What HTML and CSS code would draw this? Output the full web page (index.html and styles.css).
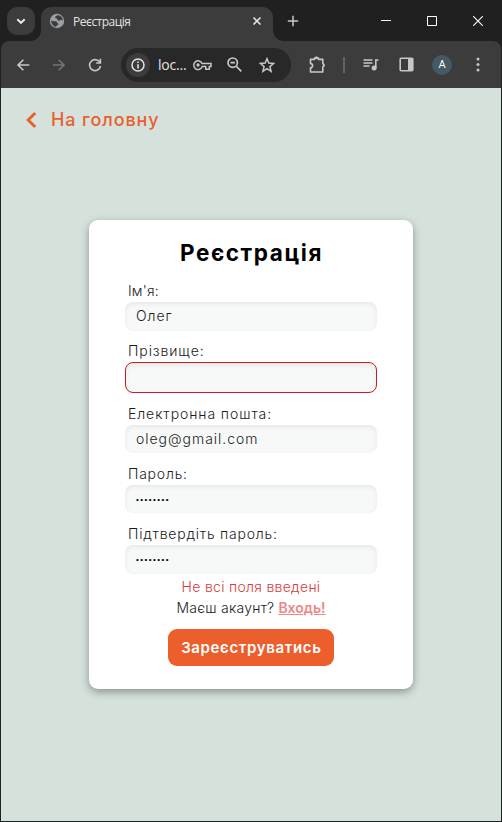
FILE: index.html
```html
<!DOCTYPE html>
<html lang="uk">
<head>
<meta charset="utf-8">
<title>Реєстрація</title>
<link rel="stylesheet" href="styles.css">
</head>
<body>
<div class="window">
  <header class="tabstrip">
    <div class="tab-search"><svg width="12" height="12" viewBox="0 0 12 12"><path d="M2.3 4.2 6 7.8 9.7 4.2" fill="none" stroke="#e8e8e8" stroke-width="1.9"/></svg></div>
    <div class="tab">
      <svg class="globe" width="16" height="16" viewBox="0 0 16 16"><circle cx="8" cy="8" r="7.2" fill="#9aa0a6"/><path d="M2.2 7.2c1.5 1.5 3.6.6 5.2 1.2 1.2.5.6 1.8 1.6 2.1.7.3.6 1.3-.4 1.5-1.2.2-.7 1.3-1.4 1.8-3-.2-5.1-3.3-5-6.6ZM8.3 2.2c-.6 1-2.3 1-2.2 2.2.1 1 1.5.5 2.1 1.3.8 1.1-.2 1.5 1.2 2 1.5.6 1.5-1.2 2.8-.9.8.2 1 .8 1.7.7C13.700 4.500 11.600 2 8.300 2.200Z" fill="#3c3c3c"/></svg>
      <span class="tab-title">Реєстрація</span>
      <svg class="tab-close" width="10" height="10" viewBox="0 0 10 10"><path d="M1.5 1.5l7 7m0-7-7 7" stroke="#e3e3e3" stroke-width="1.6"/></svg>
    </div>
    <svg class="new-tab" width="12" height="12" viewBox="0 0 12 12"><path d="M6 .8v10.4M.8 6h10.4" stroke="#c7c7c7" stroke-width="1.5"/></svg>
    <div class="controls">
      <svg width="10" height="10" viewBox="0 0 10 10"><path d="M0 4.500h10" stroke="#fff"/></svg>
      <svg width="10" height="10" viewBox="0 0 10 10"><path d="M.5.5h9v9h-9Z" fill="none" stroke="#fff"/></svg>
      <svg width="10" height="10" viewBox="0 0 10 10"><path d="M.2.2l9.600 9.600m0-9.600L.2 9.800" stroke="#fff" stroke-width="1.1"/></svg>
    </div>
  </header>
  <nav class="toolbar">
    <svg class="back" width="14" height="14" viewBox="0 0 14 14"><path d="M13.300 7H2m5.400-5.300L2 7l5.400 5.300" fill="none" stroke="#c7c7c7" stroke-width="1.6"/></svg>
    <svg class="forward" width="14" height="14" viewBox="0 0 14 14"><path d="M1 7h11M6.600 1.700 12 7l-5.400 5.300" fill="none" stroke="#757575" stroke-width="1.6"/></svg>
    <svg class="reload" width="14" height="14" viewBox="0 0 14 14"><path d="M12 4.700A5.500 5.500 0 1 0 12.500 8" fill="none" stroke="#c7c7c7" stroke-width="1.6"/><path d="M13.200.8v5H8.200V4.200h3.400V.8Z" fill="#c7c7c7"/></svg>
    <div class="omnibox">
      <div class="site-info"><svg width="14" height="14" viewBox="0 0 14 14"><circle cx="7" cy="7" r="6" fill="none" stroke="#e3e3e3" stroke-width="1.5"/><path d="M7 6.200v4.300M7 3.500v1.600" stroke="#e3e3e3" stroke-width="1.6"/></svg></div>
      <span class="url">loc...</span>
      <svg class="key" width="19" height="12" viewBox="0 0 19 12"><path d="M9 4.400h9v3h-1.700v2.800h-3.600V7.400H9.200A4.300 4.300 0 1 1 9 4.400Z" fill="none" stroke="#c7c7c7" stroke-width="1.5"/><circle cx="5" cy="6" r="1.700" fill="#c7c7c7"/></svg>
      <svg class="lens" width="15" height="15" viewBox="0 0 15 15"><circle cx="5.700" cy="5.700" r="4.700" fill="none" stroke="#c7c7c7" stroke-width="1.7"/><path d="M3.500 5.700h4.400M9 9l5.300 5.300" stroke="#c7c7c7" stroke-width="1.7"/></svg>
      <svg class="star" width="16" height="16" viewBox="0 0 16 16"><path d="m8 1.700 1.800 4.400 4.800.4-3.700 3.100 1.200 4.700L8 11.700l-4.100 2.600 1.200-4.700-3.700-3.100 4.800-.4Z" fill="none" stroke="#c7c7c7" stroke-width="1.5"/></svg>
    </div>
    <svg class="extensions" width="17" height="17" viewBox="0 0 17 17"><path d="M1.500 3h4a2 2 0 0 1 4 0h4.300v4a1.900 1.900 0 0 1 0 3.600v5H1.500v-4.200a2.100 2.100 0 0 0 0-4.200Z" transform="translate(0 .4)" fill="none" stroke="#c7c7c7" stroke-width="1.6" stroke-linejoin="round"/><path d="M5.700 3a2 2 0 0 1 3.700 0ZM13.800 7.200a2 2 0 0 1 0 3.800Z" fill="#c7c7c7"/></svg>
    <i class="divider"></i>
    <svg class="media" width="16" height="14" viewBox="0 0 16 14"><path d="M.5 2h9M.5 5h9M.5 8h6" stroke="#c7c7c7" stroke-width="1.5"/><path d="M12.800 10V2h2.700" fill="none" stroke="#c7c7c7" stroke-width="1.6"/><circle cx="11.100" cy="10" r="2.500" fill="#c7c7c7"/></svg>
    <svg class="panel" width="15" height="15" viewBox="0 0 15 15"><rect x="1.200" y="1.200" width="12.600" height="12.600" rx="1" fill="none" stroke="#c7c7c7" stroke-width="1.6"/><path d="M9 1h5v13H9Z" fill="#c7c7c7"/></svg>
    <span class="avatar">A</span>
    <svg class="menu" width="4" height="15" viewBox="0 0 4 15"><g fill="#c7c7c7"><circle cx="2" cy="2" r="1.500"/><circle cx="2" cy="7.500" r="1.500"/><circle cx="2" cy="13" r="1.500"/></g></svg>
  </nav>
  <main class="page">
    <a class="home"><svg width="11" height="16" viewBox="0 0 11 16"><path d="M10.200 1 3.200 8l7 7" fill="none" stroke="#e9602f" stroke-width="2.9"/></svg><span>На головну</span></a>
    <form class="card">
      <h1>Реєстрація</h1>
      <div class="field"><label class="l-name">Ім'я:</label><div class="input">Олег</div></div>
      <div class="field"><label>Прізвище:</label><div class="input invalid"></div></div>
      <div class="field"><label>Електронна пошта:</label><div class="input">oleg@gmail.com</div></div>
      <div class="field"><label class="tight">Пароль:</label><div class="input secret">••••••••</div></div>
      <div class="field"><label class="tight">Підтвердіть пароль:</label><div class="input secret">••••••••</div></div>
      <p class="error">Не всі поля введені</p>
      <p class="login"><span>Маєш акаунт?</span><a>Входь!</a></p>
      <div class="submit">Зареєструватись</div>
    </form>
  </main>
</div>
</body>
</html>
```
FILE: styles.css
```css
* { box-sizing: border-box; }
body { margin: 0; font-family: Inter, "Liberation Sans", sans-serif; }
svg { display: block; flex: none; }
.window { width: 502px; height: 822px; display: flex; flex-direction: column; background: #202020; border: 1px solid #202020; border-top: 0; overflow: hidden; }
.tabstrip { height: 41px; flex: none; display: flex; align-items: center; padding-left: 6px; background: #202020; }
.tab-search { width: 28px; height: 28px; border-radius: 10px; background: #3c3c3c; display: grid; place-items: center; }
.tab { position: relative; width: 232px; height: 34px; margin: 7px 0 0 6px; padding: 0 11px 6px 8px; border-radius: 10px 10px 0 0; background: #3c3c3c; display: flex; align-items: center; }
.tab::before, .tab::after { content: ""; position: absolute; bottom: 0; width: 10px; height: 10px; }
.tab::before { left: -10px; background: radial-gradient(circle at 0 0, transparent 9.5px, #3c3c3c 10px); }
.tab::after { right: -10px; background: radial-gradient(circle at 100% 0, transparent 9.5px, #3c3c3c 10px); }
.tab-title { margin-left: 8px; color: #e3e3e3; font: 12px "Open Sans", sans-serif; letter-spacing: -.5px; }
.tab-close { margin-left: auto; }
.new-tab { margin-left: 14px; }
.controls { display: flex; gap: 36px; margin: 0 18px 0 auto; }
.toolbar { height: 47px; flex: none; display: flex; align-items: center; padding-left: 15px; background: #3c3c3c; border-radius: 8px 8px 0 0; }
.forward { margin-left: 22px; }
.reload { margin-left: 22px; }
.omnibox { width: 170px; height: 34px; margin-left: 19px; padding-left: 5px; border-radius: 17px; background: #282828; display: flex; align-items: center; }
.site-info { width: 24px; height: 24px; border-radius: 50%; background: #3c3c3c; display: grid; place-items: center; }
.url { width: 29px; margin-left: 8px; color: #e3e3e3; font: 14px "Open Sans", sans-serif; letter-spacing: -.2px; }
.key { margin-left: 6px; }
.lens { margin-left: 15px; }
.star { margin-left: 17px; }
.extensions { margin-left: 18px; }
.divider { width: 2px; height: 16px; margin-left: 17px; background: #626262; }
.media { margin-left: 18px; }
.panel { margin-left: 20px; }
.avatar { width: 20px; height: 20px; margin-left: 18px; border-radius: 50%; background: #455a64; color: #fff; font: 400 11px/20px Roboto, sans-serif; text-align: center; }
.menu { margin-left: 24px; }
.page { flex: 1; display: flex; flex-direction: column; align-items: center; background: #d5e2db; }
.home { align-self: flex-start; display: flex; align-items: center; height: 24px; margin: 20px 0 0 24px; gap: 15px; color: #e9602f; font-size: 18px; line-height: 22px; font-weight: 500; letter-spacing: .87px; white-space: nowrap; }
.home span { padding-bottom: 1px; }
.card { width: 324px; height: 469px; margin-top: 88px; padding: 20px 36px 0; border-radius: 9px; background: #fff; box-shadow: 0 3px 8px rgba(0, 0, 0, .35); display: flex; flex-direction: column; color: #1b1b22; font-size: 14px; font-weight: 300; }
h1 { margin: 0 0 17px; height: 25px; text-align: center; color: #000; font-size: 22.5px; line-height: 25px; font-weight: 700; letter-spacing: 1.6px; text-indent: 1px; white-space: nowrap; }
.field { margin-bottom: 11.8px; }
.field label { display: block; height: 20px; padding-left: 3px; line-height: 17px; letter-spacing: .92px; white-space: nowrap; }
.field .l-name { letter-spacing: .15px; }
.field .tight { letter-spacing: .78px; }
.input { height: 28.5px; padding-left: 11px; border-radius: 8px; background: #f7f9f8; box-shadow: inset 0 2px 5px rgba(0, 0, 0, .07); line-height: 28px; letter-spacing: .97px; white-space: nowrap; }
.invalid { height: 30.5px; border: 1px solid #c81e1e; }
.secret { color: #000; font: 8px/30px "Liberation Sans", sans-serif; letter-spacing: 1.45px; }
.field:nth-of-type(5) { margin-bottom: 3.8px; }
.error, .login { margin: 0; height: 21px; line-height: 20px; text-align: center; white-space: nowrap; }
.error { color: #d93a3a; letter-spacing: .3px; }
.login { display: flex; justify-content: center; gap: 4px; }
.login span { letter-spacing: .25px; }
.login a { color: #ef8787; font-weight: 600; text-decoration: underline; }
.submit { width: 166px; height: 37px; margin: 9.5px auto 0; border-radius: 9px; background: #ec5e2c; color: #fff; font-size: 15px; line-height: 37px; font-weight: 600; letter-spacing: .65px; text-indent: .7px; text-align: center; white-space: nowrap; }
```
